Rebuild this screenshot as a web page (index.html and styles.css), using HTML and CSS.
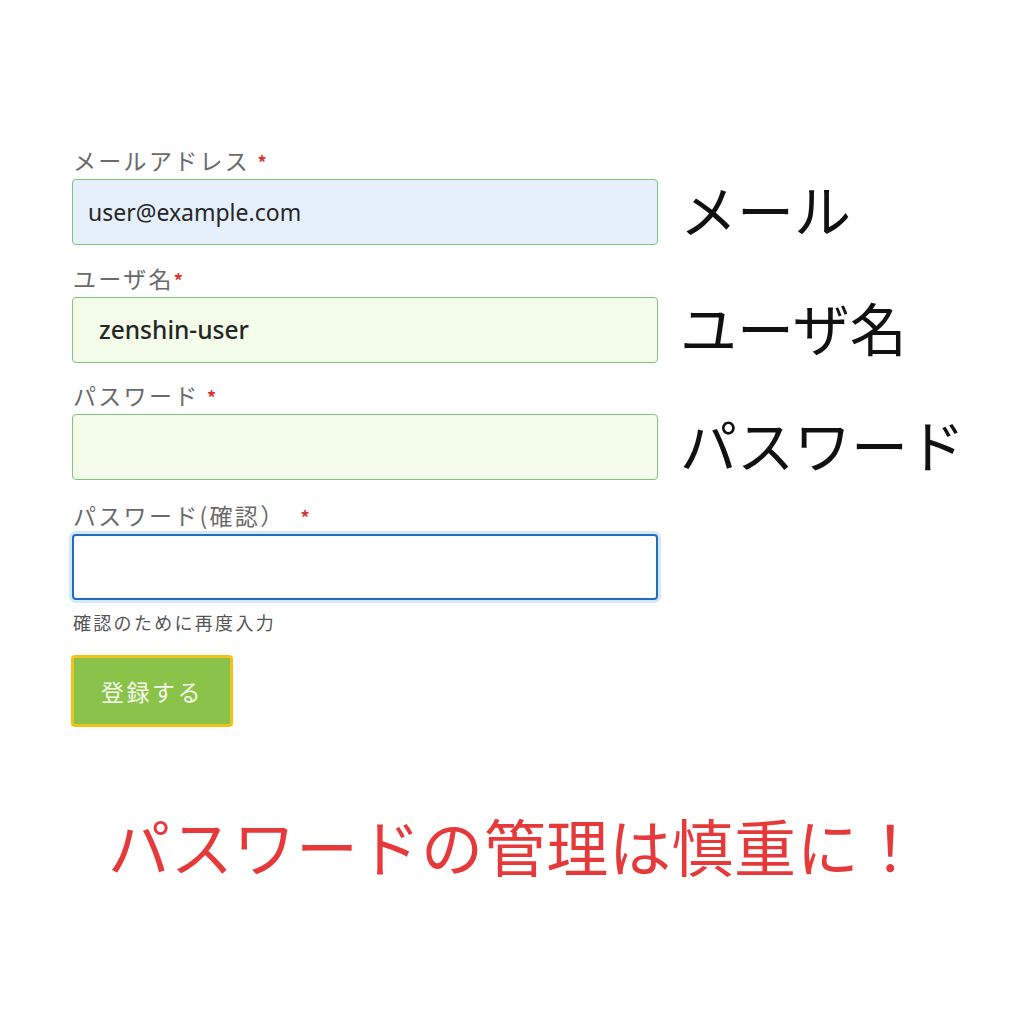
FILE: index.html
```html
<!DOCTYPE html>
<html lang="ja">
<head>
<meta charset="utf-8">
<link rel="stylesheet" href="styles.css">
</head>
<body>
<main class="page">
  <form class="form">
    <div class="field">
      <label class="label">メールアドレス <span class="req">*</span></label>
      <div class="input input-autofill"><span class="value value-email">user@example.com</span></div>
      <div class="side">メール</div>
    </div>
    <div class="field">
      <label class="label">ユーザ名<span class="req">*</span></label>
      <div class="input input-valid"><span class="value value-user">zenshin-user</span></div>
      <div class="side">ユーザ名</div>
    </div>
    <div class="field">
      <label class="label">パスワード <span class="req">*</span></label>
      <div class="input input-valid"></div>
      <div class="side">パスワード</div>
    </div>
    <div class="field field-confirm">
      <label class="label">パスワード(確認）&nbsp;&nbsp;<span class="req">*</span></label>
      <div class="input input-focus"></div>
    </div>
    <p class="help">確認のために再度入力</p>
    <button type="button" class="submit">登録する</button>
  </form>
  <p class="warning">パスワードの管理は慎重に！</p>
</main>
</body>
</html>
```

FILE: styles.css
```css
* { box-sizing: border-box; }
html, body { margin: 0; padding: 0; background: #ffffff; }
body {
  font-family: "Noto Sans CJK JP", "Noto Sans", sans-serif;
  color: #222;
  width: 1024px;
  height: 1024px;
  overflow: hidden;
}
.page {
  padding: 145px 0 0 72px;
}
.form {
  display: flex;
  flex-direction: column;
}
.field {
  display: grid;
  grid-template-columns: 586px auto;
  column-gap: 22px;
  margin-bottom: 17.5px;
}
.field-confirm { margin-bottom: 0; margin-top: 2px; }
.label {
  grid-column: 1;
  height: 30px;
  font-size: 23px;
  line-height: 30px;
  letter-spacing: 2.3px;
  color: #6a6a6a;
  margin-bottom: 4px;
  padding-left: 1px;
}
.req {
  color: #d93434;
  font-size: 18px;
  line-height: 1;
  font-weight: 700;
  letter-spacing: 0;
}
.input {
  grid-column: 1;
  height: 66px;
  border: 1.5px solid #7cc67a;
  border-radius: 4px;
  display: flex;
  align-items: center;
}
.input-autofill { background: #e6f0fc; }
.input-valid { background: #f4fdea; }
.input-focus {
  background: #ffffff;
  border: 2.5px solid #1f6fc0;
  box-shadow: 0 0 0 3px #d6e8f8;
}
.value {
  font-family: "Noto Sans", "Open Sans", sans-serif;
  color: #262626;
}
.value-email { font-size: 23px; padding-left: 15px; }
.value-user { font-size: 24.5px; padding-left: 26px; font-weight: 500; }
.side {
  grid-column: 2;
  grid-row: 2;
  align-self: center;
  margin-top: -8px;
  font-size: 57px;
  line-height: 60px;
  color: #111;
  white-space: nowrap;
}
.help {
  margin: 11px 0 0 0;
  font-size: 18px;
  line-height: 22px;
  letter-spacing: 2.3px;
  color: #555;
  padding-left: 1px;
}
.submit {
  margin-top: 22px;
  width: 162px;
  height: 72px;
  background: #8bc34a;
  border: 3px solid #f2c21b;
  border-radius: 4px;
  color: #f3f9e8;
  font-family: "Noto Sans CJK JP", sans-serif;
  font-size: 23px;
  letter-spacing: 2.5px;
  padding: 0;
  align-self: flex-start;
  margin-left: -1px;
}
.warning {
  margin: 78px 0 0 -69px;
  width: 1024px;
  text-align: center;
  font-size: 62px;
  line-height: 80px;
  letter-spacing: 0.6px;
  color: #e5393a;
}
```
